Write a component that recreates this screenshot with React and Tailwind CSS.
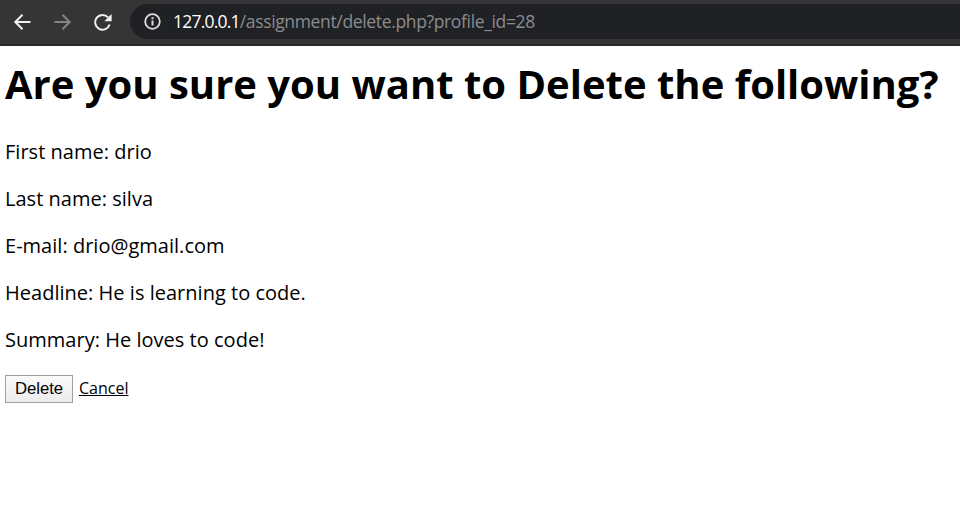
const fields = [
  ['First name', 'drio'],
  ['Last name', 'silva'],
  ['E-mail', 'drio@gmail.com'],
  ['Headline', 'He is learning to code.'],
  ['Summary', 'He loves to code!'],
];

function BrowserBar() {
  return (
    <header className="flex h-[46px] items-start border-b-2 border-[#292929] bg-[#353535] pt-1 text-white">
      <nav className="flex h-[35px] w-[130px] items-center gap-[20px] pl-[12px]">
        <svg className="size-5" viewBox="0 0 20 20" fill="none" stroke="#f1f1f1" strokeWidth="2">
          <path d="M18.5 10H3.5M10.5 2.8L3.3 10L10.5 17.2" />
        </svg>
        <svg className="size-5" viewBox="0 0 20 20" fill="none" stroke="#858585" strokeWidth="2">
          <path d="M2.5 10H17.5M10.5 2.8L17.7 10L10.5 17.2" />
        </svg>
        <svg className="size-5" viewBox="0 0 20 20" fill="none" stroke="#f1f1f1" strokeWidth="2">
          <path d="M16.1 5.4A7.4 7.4 0 1 0 17.6 12.5" />
          <path d="M19.6 2V9.3H12.3Z" fill="#f1f1f1" stroke="none" />
        </svg>
      </nav>
      <div className="flex h-[35px] flex-1 items-center rounded-l-full bg-[#202124] pl-[14px]">
        <svg className="size-[17px]" viewBox="0 0 17 17" fill="none" stroke="#dddddd">
          <circle cx="8.5" cy="8.5" r="7.3" strokeWidth="1.8" />
          <path d="M8.5 7.5V12.6M8.5 4.3V6.2" strokeWidth="2" />
        </svg>
        <span className="mb-[2px] ml-3 whitespace-nowrap font-['Open_Sans',sans-serif] text-[17.5px] leading-6 tracking-[-0.35px] text-[#8b8c8e]">
          <span className="tracking-[-0.79px] text-white">127.0.0.1</span>/assignment/delete.php?profile_id=28
        </span>
      </div>
    </header>
  );
}

export default function App() {
  return (
    <div className="h-screen overflow-hidden bg-white font-['Open_Sans',sans-serif] text-black">
      <BrowserBar />
      <main className="pl-[5px]">
        <h1 className="pt-[10px] text-[40px] leading-[56px] font-bold whitespace-nowrap">
          Are you sure you want to Delete the following?
        </h1>
        <div className="mt-[26px] flex flex-col gap-[19px] text-[20px] leading-7 tracking-[0.02px]">
          {fields.map(([label, value]) => (
            <p key={label}>{label}: {value}</p>
          ))}
        </div>
        <form className="mt-[21px] flex items-start gap-[6px]" onSubmit={(e) => e.preventDefault()}>
          <button className="h-7 w-[68px] border border-[#a0a0a0] bg-linear-to-b from-[#fafafa] to-[#ececec] pb-px font-['Liberation_Sans',sans-serif] text-[16.7px] leading-6">
            Delete
          </button>
          <a href="#" className="mt-px text-[16px] leading-6 underline">Cancel</a>
        </form>
      </main>
    </div>
  );
}
